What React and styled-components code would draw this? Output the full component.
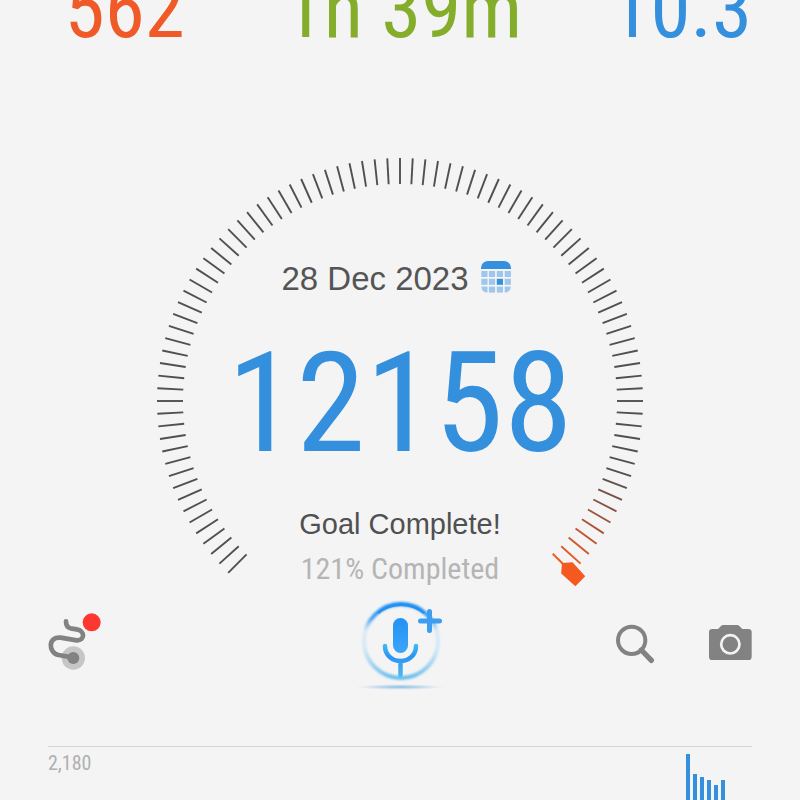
import styled, { createGlobalStyle } from 'styled-components';

const STATS = [
  { id: 'calories', value: '562', color: '#f05a28' },
  { id: 'duration', value: '1h 39m', color: '#84ad2b' },
  { id: 'distance', value: '10.3', color: '#348fdd' },
];

const BARS = [93, 73, 70, 67, 62, 67];

const LAST_TICK = 45;
const FADE_START = 36;
const DARK = [80, 80, 80];
const ORANGE = [244, 89, 34];

const tickColor = index => {
  const t = Math.max(0, (index - FADE_START) / (LAST_TICK - FADE_START));
  const mixed = DARK.map((c, i) => Math.round(c + (ORANGE[i] - c) * t));
  return `rgb(${mixed.join(',')})`;
};

const ticks = Array.from({ length: LAST_TICK * 2 }, (_, i) => i - LAST_TICK);

const Dial = () => (
  <DialDrawing viewBox='0 0 488 432' aria-hidden='true'>
    {ticks.map(index => (
      <line
        key={index}
        x1='244'
        y1='1'
        x2='244'
        y2='27'
        stroke={tickColor(index)}
        strokeWidth='1.9'
        transform={`rotate(${index * 3} 244 244)`}
      />
    ))}
    <g transform='rotate(135 244 244)'>
      <path d='M244 12V28' stroke='#f4591f' strokeWidth='2' />
      <path d='M237 -11H251L252 8L244 15L236 8Z' fill='#f4591f' />
    </g>
  </DialDrawing>
);

const CalendarIcon = () => (
  <svg width='30' height='32' viewBox='0 0 30 32' aria-hidden='true'>
    <defs>
      <clipPath id='calendar-shape'>
        <rect width='30' height='32' rx='7' />
      </clipPath>
    </defs>
    <g clipPath='url(#calendar-shape)'>
      <rect width='30' height='8' fill='#348fdd' />
      {[0, 1, 2].map(row =>
        [0, 1, 2, 3].map(col => (
          <rect
            key={`${row}-${col}`}
            x={col * 7.9 + (col ? 0 : 0.3)}
            y={10 + row * 7.8}
            width='6.2'
            height='6'
            fill={row === 1 && col === 2 ? '#348fdd' : '#9fc6ec'}
          />
        ))
      )}
    </g>
  </svg>
);

const RouteIcon = () => (
  <svg width='54' height='64' viewBox='0 0 162 192' aria-hidden='true'>
    <circle cx='76' cy='138' r='35' fill='#c6c6c6' />
    <path
      d='M54 28C54 40 58 47 68 49L86 52C112 56 111 87 86 85L38 77C0 72 -1 122 32 129L76 137'
      fill='none'
      stroke='#828282'
      strokeWidth='14'
      strokeLinecap='round'
    />
    <circle cx='76' cy='138' r='18' fill='#828282' />
    <circle cx='131' cy='31' r='27' fill='#fd3830' />
  </svg>
);

const MicIcon = () => (
  <svg width='96' height='96' viewBox='0 0 96 96' fill='none' aria-hidden='true'>
    <defs>
      <linearGradient id='ring' x1='0' y1='7' x2='0' y2='84' gradientUnits='userSpaceOnUse'>
        <stop offset='0' stopColor='#1688ef' />
        <stop offset='0.2' stopColor='#45a2f2' />
        <stop offset='0.36' stopColor='#cfe5f8' stopOpacity='0.7' />
        <stop offset='0.6' stopColor='#c3e3f8' stopOpacity='0.7' />
        <stop offset='1' stopColor='#5cb8e9' />
      </linearGradient>
      <linearGradient id='capsule' x1='0' y1='22' x2='0' y2='57' gradientUnits='userSpaceOnUse'>
        <stop stopColor='#2492f3' />
        <stop offset='1' stopColor='#3ba5fb' />
      </linearGradient>
      <linearGradient id='stand' x1='0' y1='48' x2='0' y2='80' gradientUnits='userSpaceOnUse'>
        <stop stopColor='#43bdf0' />
        <stop offset='0.4' stopColor='#2994f3' />
        <stop offset='1' stopColor='#50b5ee' />
      </linearGradient>
      <radialGradient id='shadow'>
        <stop stopColor='#86bde6' />
        <stop offset='0.5' stopColor='#b0d0ea' stopOpacity='0.7' />
        <stop offset='1' stopColor='#d9e6f2' stopOpacity='0' />
      </radialGradient>
      <filter id='soft' x='-20%' y='-20%' width='140%' height='140%'>
        <feGaussianBlur stdDeviation='1' />
      </filter>
    </defs>
    <circle cx='49' cy='45' r='37' stroke='url(#ring)' strokeWidth='4' filter='url(#soft)' />
    <path d='M26 17A36 36 0 0 1 72 17' stroke='#2490f1' strokeWidth='2.5' />
    <rect x='41' y='22' width='15' height='35' rx='7.5' fill='url(#capsule)' />
    <path
      d='M33 50C33 59 40 65 48.5 65S64 59 64 50M48.5 65V79'
      stroke='url(#stand)'
      strokeWidth='4.5'
      strokeLinecap='round'
    />
    <path
      d='M77.5 15.5V34.5M68.5 25H87.5'
      stroke='#3d9df0'
      strokeWidth='5'
      strokeLinecap='round'
    />
    <ellipse cx='48' cy='91' rx='46' ry='3' fill='url(#shadow)' />
  </svg>
);

const SearchIcon = () => (
  <svg width='40' height='44' viewBox='45 36 120 132' fill='none' aria-hidden='true'>
    <circle cx='95' cy='91' r='41' stroke='#828282' strokeWidth='12' />
    <path d='M124 120L154 151' stroke='#828282' strokeWidth='16' strokeLinecap='round' />
  </svg>
);

const CameraIcon = () => (
  <svg width='43' height='44' viewBox='327 36 129 132' aria-hidden='true'>
    <path
      d='M337 57H354L363 48Q366 45 370 45H411Q415 45 418 48L427 57H445Q455 57 455 67V140Q455 150 445 150H337Q327 150 327 140V67Q327 57 337 57Z'
      fill='#828282'
    />
    <circle cx='391' cy='103' r='27.5' fill='#828282' stroke='#f4f4f4' strokeWidth='8' />
  </svg>
);

const App = () => {
  return (
    <>
      <GlobalStyle />
      <Page>
        <Stats>
          {STATS.map(({ id, value, color }) => (
            <Stat key={id} $color={color}>
              {value}
            </Stat>
          ))}
        </Stats>

        <Gauge>
          <Dial />
          <Summary>
            <DateButton type='button'>
              28 Dec 2023
              <CalendarIcon />
            </DateButton>
            <Steps>12158</Steps>
            <Goal>Goal Complete!</Goal>
            <Percent>121% Completed</Percent>
          </Summary>
        </Gauge>

        <Toolbar>
          <IconButton type='button' aria-label='Routes'>
            <RouteIcon />
          </IconButton>
          <IconButton type='button' aria-label='Add by voice'>
            <MicIcon />
          </IconButton>
          <Actions>
            <IconButton type='button' aria-label='Search'>
              <SearchIcon />
            </IconButton>
            <IconButton type='button' aria-label='Camera'>
              <CameraIcon />
            </IconButton>
          </Actions>
        </Toolbar>

        <Chart>
          <ScaleLabel>2,180</ScaleLabel>
          <Bars>
            {BARS.map((height, i) => (
              <Bar key={i} style={{ height }} />
            ))}
          </Bars>
        </Chart>
      </Page>
    </>
  );
};

const GlobalStyle = createGlobalStyle`
  * {
    box-sizing: border-box;
  }

  body {
    margin: 0;
    background: #f4f4f4;
    font-family: 'Liberation Sans', Arial, sans-serif;
  }

  p {
    margin: 0;
  }
`;

const narrow = `'Roboto Condensed', 'Arial Narrow', sans-serif`;

const Page = styled.main`
  display: flex;
  flex-direction: column;
  height: 100vh;
  overflow: hidden;
`;

const Stats = styled.header`
  flex: none;
  display: grid;
  grid-template-columns: 1fr 2fr 1fr;
  align-content: end;
  height: 61px;
  padding: 0 26px 0 32px;
`;

const Stat = styled.p`
  color: ${props => props.$color};
  font-family: ${narrow};
  font-size: 81px;
  line-height: 102px;
  text-align: center;
  white-space: nowrap;
`;

const Gauge = styled.section`
  flex: none;
  display: grid;
  justify-content: center;
  margin-top: 96px;
`;

const DialDrawing = styled.svg`
  grid-area: 1 / 1;
  width: 488px;
  height: 432px;
  overflow: visible;
`;

const Summary = styled.div`
  grid-area: 1 / 1;
  display: flex;
  flex-direction: column;
  align-items: center;
  padding-top: 102px;
  text-align: center;
`;

const DateButton = styled.button`
  display: flex;
  align-items: center;
  gap: 12px;
  padding: 0 8px 0 0;
  border: 0;
  background: none;
  color: #555;
  font-family: inherit;
  font-size: 33px;
  line-height: 40px;
  cursor: pointer;

  svg {
    margin-bottom: 4px;
  }
`;

const Steps = styled.p`
  margin-top: 20px;
  color: #348fdd;
  font-family: ${narrow};
  font-size: 140px;
  line-height: 168px;
`;

const Goal = styled.p`
  margin-top: 17px;
  color: #505050;
  font-size: 29px;
  line-height: 40px;
`;

const Percent = styled.p`
  margin-top: 5px;
  color: #b5b5b5;
  font-family: ${narrow};
  font-size: 30px;
  line-height: 40px;
`;

const Toolbar = styled.nav`
  flex: none;
  display: grid;
  grid-template-columns: 1fr auto 1fr;
  align-items: center;
  margin-top: 7px;
  padding: 0 48px;
`;

const IconButton = styled.button`
  display: flex;
  justify-self: start;
  padding: 0;
  border: 0;
  background: none;
  cursor: pointer;
`;

const Actions = styled.div`
  display: flex;
  justify-content: flex-end;
  gap: 54px;
`;

const Chart = styled.section`
  flex: none;
  display: flex;
  justify-content: space-between;
  height: 101px;
  margin: 54px 48px 0;
  border-top: 1px solid #d4d4d4;
`;

const ScaleLabel = styled.p`
  padding-top: 4px;
  color: #b0b0b0;
  font-family: ${narrow};
  font-size: 20px;
  line-height: 24px;
`;

const Bars = styled.div`
  display: flex;
  align-items: flex-end;
  gap: 3px;
  padding-right: 27px;
`;

const Bar = styled.div`
  width: 4px;
  background: #348fdd;
`;

export default App;
